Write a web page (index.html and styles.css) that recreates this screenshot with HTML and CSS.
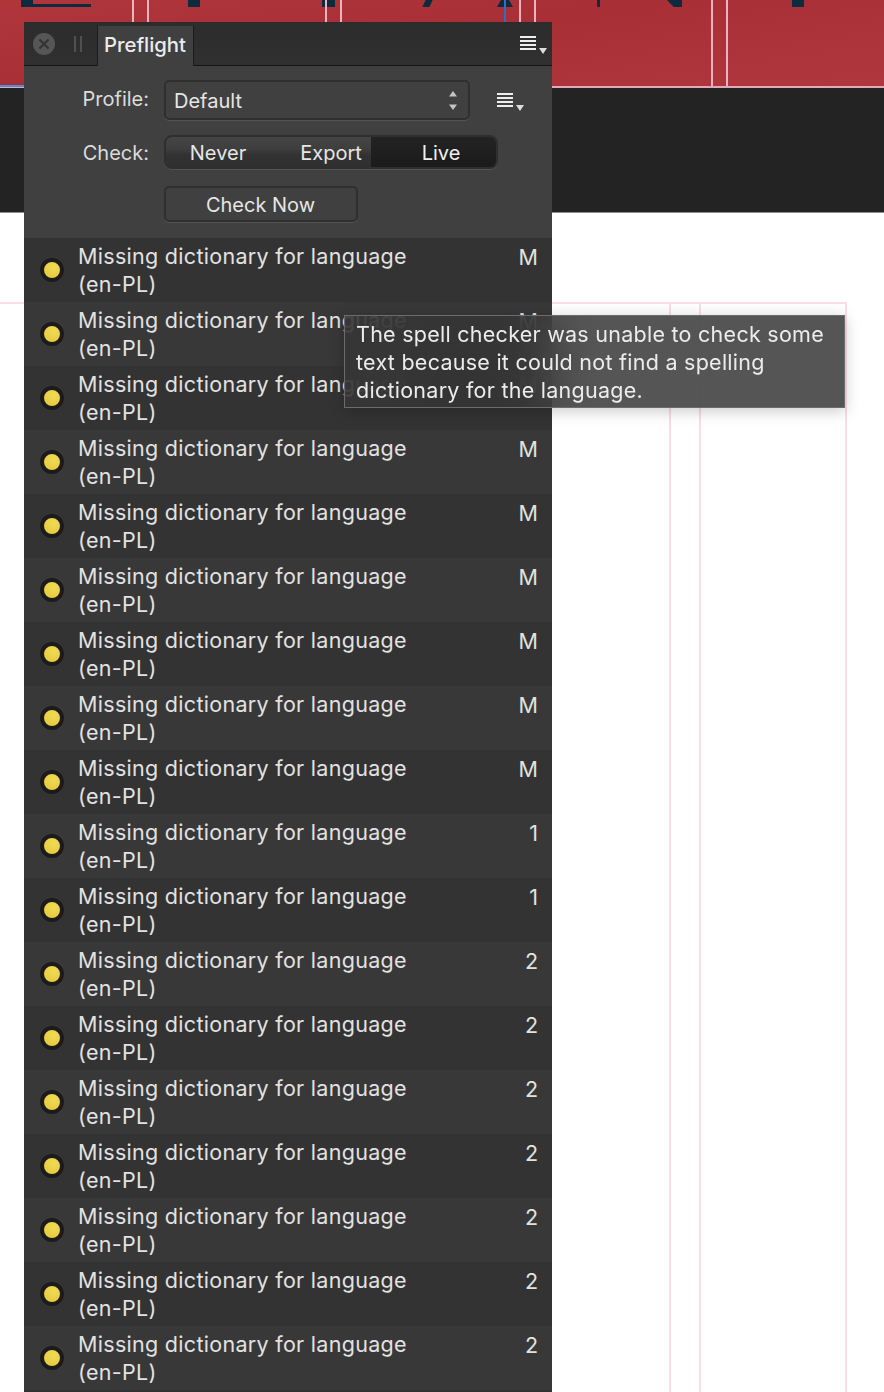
FILE: index.html
```html
<!DOCTYPE html>
<html>
    <head>
        <title>Preflight</title>
        <link rel="stylesheet" href="styles.css">
    </head>
    <body>
        <div class="canvas">
            <div class="band-red"></div>
            <div class="band-dark"></div>
            <div class="band-white"></div>

            <!-- page content on the canvas -->
            <i class="glyph g-stem-1"></i>
            <i class="glyph g-foot"></i>
            <i class="glyph g-stem-2"></i>
            <i class="glyph g-stem-3"></i>
            <i class="glyph g-slant"></i>
            <i class="glyph g-apex"></i>
            <i class="glyph g-tick"></i>
            <i class="glyph g-back"></i>
            <i class="glyph g-stem-4"></i>

            <!-- guides -->
            <i class="guide-v gv-1"></i>
            <i class="guide-v gv-2"></i>
            <i class="guide-v gv-3"></i>
            <i class="guide-v gv-4"></i>
            <i class="guide-v gv-5"></i>
            <i class="guide-v gv-6"></i>
            <i class="guide-v gv-7"></i>
            <i class="guide-v gv-8"></i>
            <i class="guide-blue"></i>
            <i class="guide-h-blue"></i>
            <i class="guide-page"></i>
            <i class="guide-low gl-1"></i>
            <i class="guide-low gl-2"></i>
            <i class="guide-low gl-3"></i>
        </div>

        <div class="panel">
            <div class="tabbar">
                <span class="close-btn">
                    <svg width="22" height="22" viewBox="0 0 22 22">
                        <circle cx="11" cy="11" r="11" fill="#565656"/>
                        <path d="M6.500 6.500l9 9M15.500 6.500l-9 9" stroke="#333" stroke-width="2.200" fill="none"/>
                    </svg>
                </span>
                <span class="grip"></span>
                <span class="tab">Preflight</span>
                <span class="menu-btn menu-btn-top">
                    <svg width="28" height="20" viewBox="0 0 28 20">
                        <path d="M0 1h16M0 5h16M0 9h16M0 13h16" stroke="#eee" stroke-width="2" fill="none"/>
                        <path d="M19 12h8l-4 6z" fill="#ddd"/>
                    </svg>
                </span>
            </div>

            <div class="controls">
                <div class="control-row row-profile">
                    <span class="control-label">Profile:</span>
                    <div class="select">
                        <span class="select-value">Default</span>
                        <svg class="stepper" width="8" height="19" viewBox="0 0 8 19">
                            <path d="M4 0l4 5.500H0zM4 19l4-5.500H0z" fill="#c4c4c4"/>
                        </svg>
                    </div>
                    <span class="menu-btn">
                        <svg width="28" height="20" viewBox="0 0 28 20">
                            <path d="M0 1h16M0 5h16M0 9h16M0 13h16" stroke="#eee" stroke-width="2" fill="none"/>
                            <path d="M19 12h8l-4 6z" fill="#ddd"/>
                        </svg>
                    </span>
                </div>
                <div class="control-row row-check">
                    <span class="control-label">Check:</span>
                    <div class="segments">
                        <span class="segment seg-never">Never</span>
                        <span class="segment seg-export">Export</span>
                        <span class="segment seg-live">Live</span>
                    </div>
                </div>
                <div class="control-row row-button">
                    <span class="control-label"></span>
                    <span class="check-now">Check Now</span>
                </div>
            </div>

            <div class="results">
                <div class="result"><span class="dot"></span><span class="msg">Missing dictionary for language<br>(en-PL)</span><span class="page">M</span></div>
                <div class="result"><span class="dot"></span><span class="msg">Missing dictionary for language<br>(en-PL)</span><span class="page">M</span></div>
                <div class="result"><span class="dot"></span><span class="msg">Missing dictionary for language<br>(en-PL)</span><span class="page">M</span></div>
                <div class="result"><span class="dot"></span><span class="msg">Missing dictionary for language<br>(en-PL)</span><span class="page">M</span></div>
                <div class="result"><span class="dot"></span><span class="msg">Missing dictionary for language<br>(en-PL)</span><span class="page">M</span></div>
                <div class="result"><span class="dot"></span><span class="msg">Missing dictionary for language<br>(en-PL)</span><span class="page">M</span></div>
                <div class="result"><span class="dot"></span><span class="msg">Missing dictionary for language<br>(en-PL)</span><span class="page">M</span></div>
                <div class="result"><span class="dot"></span><span class="msg">Missing dictionary for language<br>(en-PL)</span><span class="page">M</span></div>
                <div class="result"><span class="dot"></span><span class="msg">Missing dictionary for language<br>(en-PL)</span><span class="page">M</span></div>
                <div class="result"><span class="dot"></span><span class="msg">Missing dictionary for language<br>(en-PL)</span><span class="page">1</span></div>
                <div class="result"><span class="dot"></span><span class="msg">Missing dictionary for language<br>(en-PL)</span><span class="page">1</span></div>
                <div class="result"><span class="dot"></span><span class="msg">Missing dictionary for language<br>(en-PL)</span><span class="page">2</span></div>
                <div class="result"><span class="dot"></span><span class="msg">Missing dictionary for language<br>(en-PL)</span><span class="page">2</span></div>
                <div class="result"><span class="dot"></span><span class="msg">Missing dictionary for language<br>(en-PL)</span><span class="page">2</span></div>
                <div class="result"><span class="dot"></span><span class="msg">Missing dictionary for language<br>(en-PL)</span><span class="page">2</span></div>
                <div class="result"><span class="dot"></span><span class="msg">Missing dictionary for language<br>(en-PL)</span><span class="page">2</span></div>
                <div class="result"><span class="dot"></span><span class="msg">Missing dictionary for language<br>(en-PL)</span><span class="page">2</span></div>
                <div class="result"><span class="dot"></span><span class="msg">Missing dictionary for language<br>(en-PL)</span><span class="page">2</span></div>
            </div>
        </div>

        <div class="tooltip">The spell checker was unable to check some text because it could not find a spelling dictionary for the language.</div>
    </body>
</html>
```

FILE: styles.css
```css
html, body {
    margin: 0;
    height: 100%;
}
body {
    position: relative;
    width: 884px;
    height: 1392px;
    overflow: hidden;
    background: #fff;
    font-family: Inter, "Noto Sans", sans-serif;
    color: #e6e6e6;
}

/* document behind the panel */
.canvas {
    position: absolute;
    inset: 0;
    display: flex;
    flex-direction: column;
}
.band-red {
    height: 86px;
    background: linear-gradient(172deg, #b0363c 0%, #a82f35 45%, #b0373e 100%);
}
.band-dark {
    height: 124px;
    background: #232323;
    border-top: 2px solid #e3a9b6;
    border-bottom: 1px solid #8c8c8c;
}
.band-white {
    flex: 1;
    background: #fff;
}
.glyph {
    position: absolute;
    top: 0;
    height: 7px;
    background: #0d2b3e;
}
.g-stem-1 { left: 21px; width: 12px; }
.g-foot { left: 33px; width: 58px; top: 4px; height: 3px; }
.g-stem-2 { left: 188px; width: 12px; }
.g-stem-3 { left: 322px; width: 13px; }
.g-slant { left: 424px; width: 7px; transform: skewX(-25deg); }
.g-apex { left: 497px; width: 16px; clip-path: polygon(25% 0, 75% 0, 100% 100%, 0 100%); }
.g-tick { left: 597px; width: 3px; }
.g-back { left: 667px; width: 15px; clip-path: polygon(0 0, 100% 0, 100% 100%, 45% 100%); }
.g-stem-4 { left: 792px; width: 12px; }

.guide-v {
    position: absolute;
    top: 0;
    width: 2px;
    height: 86px;
    background: #e9b4c0;
}
.gv-1 { left: 132px; }
.gv-2 { left: 147px; }
.gv-3 { left: 325px; }
.gv-4 { left: 340px; }
.gv-5 { left: 519px; }
.gv-6 { left: 534px; }
.gv-7 { left: 711px; }
.gv-8 { left: 726px; }
.guide-blue {
    position: absolute;
    left: 504px;
    top: 0;
    width: 2px;
    height: 22px;
    background: #2d6fc0;
}
.guide-h-blue {
    position: absolute;
    left: 0;
    top: 85px;
    width: 24px;
    height: 2px;
    background: #4a90d9;
}
.guide-page {
    position: absolute;
    left: 0;
    top: 302px;
    width: 847px;
    height: 2px;
    background: #fadde5;
}
.guide-low {
    position: absolute;
    top: 302px;
    bottom: 0;
    width: 2px;
    background: #fadde5;
}
.gl-1 { left: 669px; }
.gl-2 { left: 699px; }
.gl-3 { left: 845px; }

/* panel */
.panel {
    position: absolute;
    left: 24px;
    top: 22px;
    bottom: 0;
    width: 528px;
    display: flex;
    flex-direction: column;
    background: #404040;
}
.tabbar {
    display: flex;
    align-items: flex-end;
    height: 43px;
    background: linear-gradient(#2c2c2c, #303030);
    border-bottom: 1px solid #141414;
    position: relative;
}
.close-btn {
    width: 22px;
    height: 22px;
    margin: 0 0 10px 9px;
}
.grip {
    width: 8px;
    height: 16px;
    margin: 0 0 13px 19px;
    border-left: 2px solid #505050;
    border-right: 2px solid #505050;
    box-sizing: border-box;
}
.tab {
    width: 97px;
    height: 40px;
    margin-left: 15px;
    margin-bottom: -1px;
    box-sizing: border-box;
    padding: 4px 0 0 6px;
    background: #404040;
    border-left: 1px solid #1c1c1c;
    border-right: 1px solid #1c1c1c;
    font-size: 20.300px;
    font-weight: 500;
    line-height: 30px;
    color: #ececec;
    white-space: nowrap;
}
.menu-btn {
    width: 28px;
    height: 20px;
    display: block;
}
.menu-btn-top {
    position: absolute;
    right: 4px;
    top: 14px;
}

.controls {
    height: 172px;
    box-sizing: border-box;
    padding-top: 13px;
    display: flex;
    flex-direction: column;
}
.control-row {
    display: flex;
    align-items: center;
}
.control-label {
    width: 125px;
    text-align: right;
    font-size: 20px;
    color: #dcdcdc;
}
.row-profile {
    height: 42px;
}
.row-profile .control-label {
    margin-bottom: 2px;
}
.select {
    width: 306px;
    height: 40px;
    margin-left: 15px;
    box-sizing: border-box;
    padding: 0 11px 0 8px;
    display: flex;
    align-items: center;
    justify-content: space-between;
    border: 2px solid #2f2f2f;
    border-radius: 5px;
    box-shadow: 0 1px 0 #535353;
    font-size: 20px;
    background: #404040;
}
.select-value {
    padding-top: 2px;
}
.row-profile .menu-btn {
    margin-left: 27px;
    margin-top: 6px;
}
.row-check {
    height: 36px;
    margin-top: 13px;
}
.row-check .control-label {
    padding-top: 2px;
}
.segments {
    display: flex;
    width: 334px;
    height: 34px;
    margin-left: 15px;
    box-sizing: border-box;
    border: 2px solid #2f2f2f;
    border-radius: 8px;
    overflow: hidden;
    box-shadow: 0 1px 0 #535353;
    font-size: 20px;
    background: linear-gradient(#444 0%, #3e3e3e 40%, #323232 60%, #2f2f2f 100%);
}
.segment {
    display: flex;
    align-items: center;
    justify-content: center;
    box-sizing: border-box;
    padding-top: 1px;
}
.seg-never {
    width: 104px;
}
.seg-export {
    width: 101px;
    padding-left: 21px;
}
.seg-live {
    flex: 1;
    padding-left: 15px;
    background: linear-gradient(#232323, #1b1b1b);
    color: #f0f0f0;
}
.row-button {
    margin-top: 16px;
}
.check-now {
    width: 194px;
    height: 36px;
    margin-left: 15px;
    box-sizing: border-box;
    border: 2px solid #2f2f2f;
    border-radius: 5px;
    box-shadow: 0 1px 0 #535353;
    padding-right: 1px;
    text-align: center;
    font-size: 20px;
    line-height: 34px;
    background: #404040;
}

.results {
    flex: 1;
    background: #333;
}
.result {
    height: 64px;
    display: flex;
    position: relative;
    background: #333;
}
.result:nth-child(even) {
    background: #383838;
}
.dot {
    width: 16px;
    height: 16px;
    margin: 20px 0 0 16px;
    flex: none;
    border: 4px solid #1b1b1b;
    border-radius: 50%;
    background: radial-gradient(circle at 60% 30%, #f0da52, #e2c63c);
}
.msg {
    margin: 4px 0 0 14px;
    font-size: 21.500px;
    letter-spacing: 0.300px;
    line-height: 28px;
    color: #e2e2e2;
    white-space: nowrap;
}
.page {
    position: absolute;
    right: 14px;
    top: 5px;
    font-size: 21.500px;
    line-height: 28px;
    color: #e2e2e2;
}

/* tooltip over panel and page */
.tooltip {
    position: absolute;
    left: 344px;
    top: 315px;
    width: 501px;
    height: 93px;
    box-sizing: border-box;
    padding: 4px 11px;
    background: rgba(52, 52, 52, 0.84);
    -webkit-backdrop-filter: blur(24px);
    backdrop-filter: blur(24px);
    border: 1px solid #6c6c6c;
    box-shadow: 0 3px 14px rgba(0, 0, 0, 0.22);
    font-size: 21.500px;
    letter-spacing: 0.260px;
    line-height: 28px;
    color: #ececec;
}
```
